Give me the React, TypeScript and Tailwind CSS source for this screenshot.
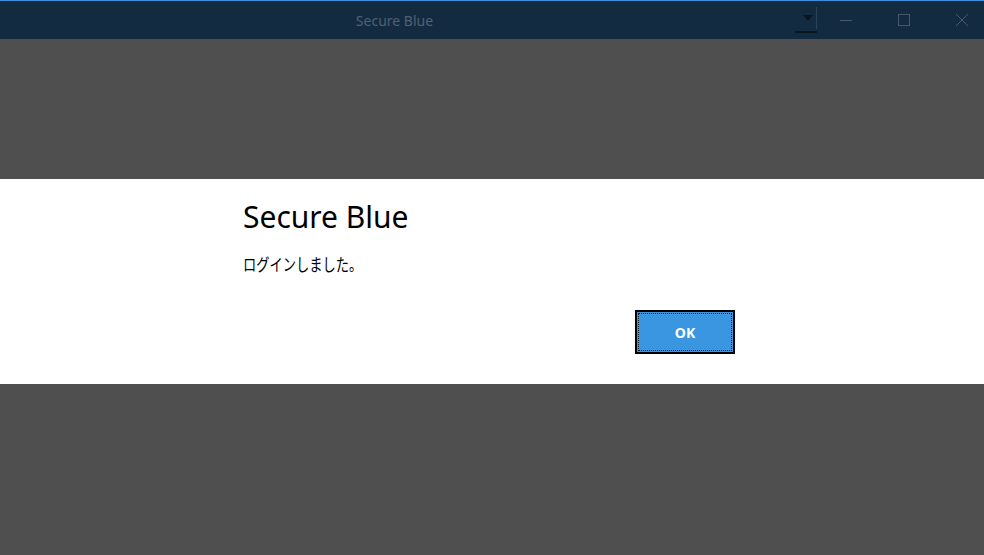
export default function App() {
  return (
    <div
      className="flex h-[555px] w-[984px] flex-col overflow-hidden bg-[#4f4f4f]"
      style={{ fontFamily: '"Noto Sans", "Noto Sans CJK JP", sans-serif' }}
    >
      {/* title bar */}
      <div className="flex h-[39px] shrink-0 items-stretch overflow-hidden border-t border-[#3a8fdc] bg-[#122b41]">
        <div className="flex flex-1 items-center justify-center pr-[6px]">
          <span className="text-[14px] text-[#4f6173]">Secure Blue</span>
        </div>
        <div className="mr-[-7px] flex shrink-0 items-center">
          <div className="relative flex h-[30px] w-[22px] items-center justify-end">
            <svg width="10" height="6" viewBox="0 0 10 6" className="mr-[4px] mt-[-4px]">
              <path d="M0 0H10L5 6Z" fill="#0a1520" />
            </svg>
            <div className="absolute right-0 top-[2px] h-[22px] w-px bg-[#2c4358]" />
            <div className="absolute bottom-[2px] left-0 h-[2px] w-[22px] bg-[#0a1520]" />
          </div>
          <div className="flex h-full w-[58px] items-center justify-center">
            <div className="h-px w-[12px] bg-[#47596b]" />
          </div>
          <div className="flex h-full w-[58px] items-center justify-center">
            <div className="h-[12px] w-[12px] border border-[#47596b]" />
          </div>
          <div className="flex h-full w-[58px] items-center justify-center">
            <svg width="14" height="14" viewBox="0 0 14 14">
              <path d="M1 1L13 13M13 1L1 13" stroke="#47596b" strokeWidth="1" />
            </svg>
          </div>
        </div>
      </div>

      <div className="h-[140px] shrink-0" />

      {/* dialog band */}
      <div className="flex h-[205px] shrink-0 flex-col bg-white">
        <div className="ml-[243px] flex w-[492px] flex-col">
          <h1 className="mt-[19px] text-[30px] leading-[38px] text-black">Secure Blue</h1>
          <p className="mt-[19px] text-[17px] leading-[20px] text-black">
            <span className="inline-block origin-left scale-x-[0.78] whitespace-nowrap">ログインしました。</span>
          </p>
          <div className="mt-[35px] flex justify-end">
            <button
              type="button"
              className="flex h-[44px] w-[100px] items-center justify-center border-2 border-black bg-[#3a96e0] p-px"
            >
              <span className="flex h-full w-full items-center justify-center border border-dotted border-[#0c2030] text-[14px] font-bold text-white">
                OK
              </span>
            </button>
          </div>
        </div>
      </div>
    </div>
  );
}
